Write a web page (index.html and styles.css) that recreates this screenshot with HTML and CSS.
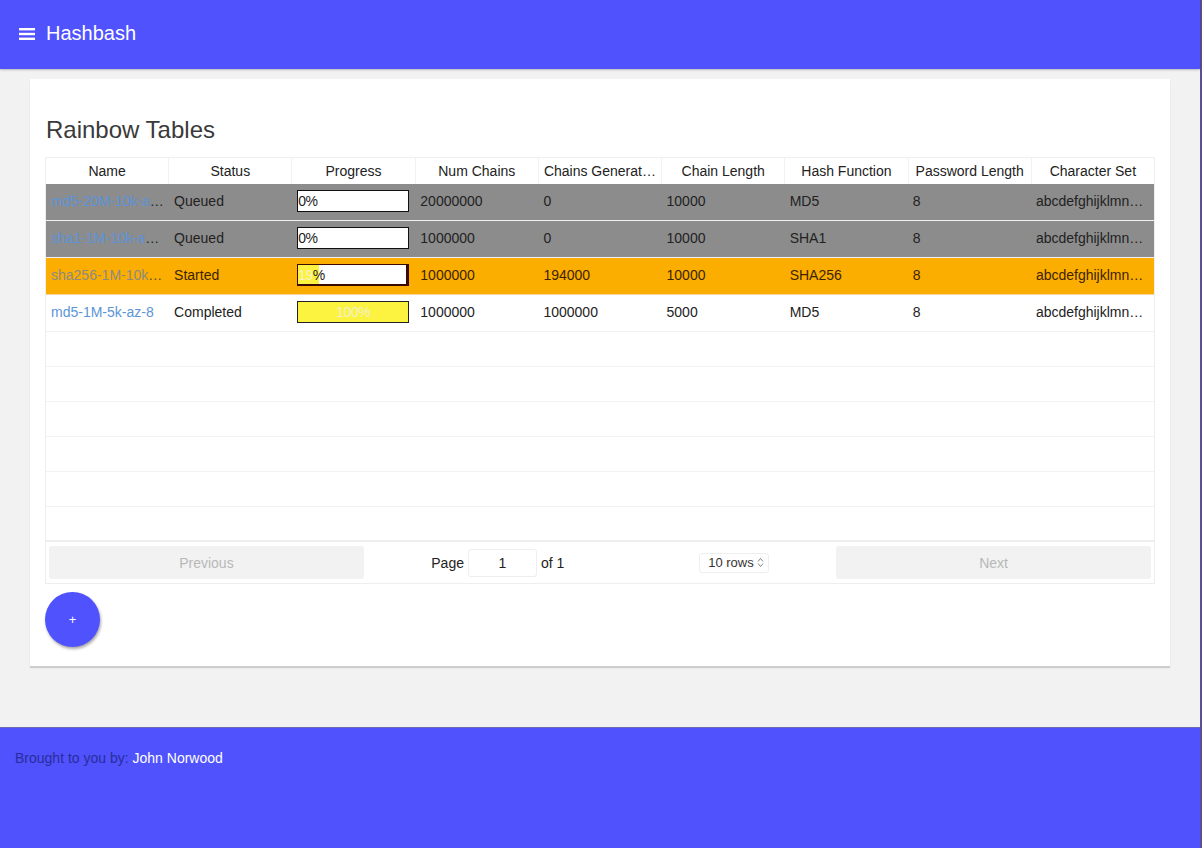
FILE: index.html
```html
<!DOCTYPE html>
<html>
<head>
<meta charset="utf-8">
<title>Hashbash</title>
<link rel="stylesheet" href="styles.css">
</head>
<body>
<div class="page">
  <header class="appbar">
    <svg class="menu" width="16" height="14" viewBox="0 0 16 14"><rect x="0" y="1" width="16" height="2.4" fill="#fff"/><rect x="0" y="5.8" width="16" height="2.4" fill="#fff"/><rect x="0" y="10.6" width="16" height="2.4" fill="#fff"/></svg>
    <span class="brand">Hashbash</span>
  </header>
  <main class="main">
    <section class="card">
      <h1 class="title">Rainbow Tables</h1>
      <div class="table">
        <div class="row head">
          <div class="cell">Name</div>
          <div class="cell">Status</div>
          <div class="cell">Progress</div>
          <div class="cell">Num Chains</div>
          <div class="cell">Chains Generated</div>
          <div class="cell">Chain Length</div>
          <div class="cell">Hash Function</div>
          <div class="cell">Password Length</div>
          <div class="cell">Character Set</div>
        </div>
        <div class="row data queued">
          <div class="cell"><a class="link">md5-20M-10k-az-8</a></div>
          <div class="cell">Queued</div>
          <div class="cell"><div class="bar"><span class="label">0%</span></div></div>
          <div class="cell">20000000</div>
          <div class="cell">0</div>
          <div class="cell">10000</div>
          <div class="cell">MD5</div>
          <div class="cell">8</div>
          <div class="cell">abcdefghijklmnopqrstuvwxyz</div>
        </div>
        <div class="row data queued">
          <div class="cell"><a class="link">sha1-1M-10k-az-8</a></div>
          <div class="cell">Queued</div>
          <div class="cell"><div class="bar"><span class="label">0%</span></div></div>
          <div class="cell">1000000</div>
          <div class="cell">0</div>
          <div class="cell">10000</div>
          <div class="cell">SHA1</div>
          <div class="cell">8</div>
          <div class="cell">abcdefghijklmnopqrstuvwxyz</div>
        </div>
        <div class="row data started">
          <div class="cell"><a class="link">sha256-1M-10k-az-8</a></div>
          <div class="cell">Started</div>
          <div class="cell"><div class="bar dark"><div class="fill" style="width:19%"></div><span class="label"><span class="on-fill">19</span>%</span></div></div>
          <div class="cell">1000000</div>
          <div class="cell">194000</div>
          <div class="cell">10000</div>
          <div class="cell">SHA256</div>
          <div class="cell">8</div>
          <div class="cell">abcdefghijklmnopqrstuvwxyz</div>
        </div>
        <div class="row data">
          <div class="cell"><a class="link">md5-1M-5k-az-8</a></div>
          <div class="cell">Completed</div>
          <div class="cell"><div class="bar full"><span class="label center">100%</span></div></div>
          <div class="cell">1000000</div>
          <div class="cell">1000000</div>
          <div class="cell">5000</div>
          <div class="cell">MD5</div>
          <div class="cell">8</div>
          <div class="cell">abcdefghijklmnopqrstuvwxyz</div>
        </div>
        <div class="row empty"><div class="cell"></div><div class="cell"></div><div class="cell"></div><div class="cell"></div><div class="cell"></div><div class="cell"></div><div class="cell"></div><div class="cell"></div><div class="cell"></div></div>
        <div class="row empty"><div class="cell"></div><div class="cell"></div><div class="cell"></div><div class="cell"></div><div class="cell"></div><div class="cell"></div><div class="cell"></div><div class="cell"></div><div class="cell"></div></div>
        <div class="row empty"><div class="cell"></div><div class="cell"></div><div class="cell"></div><div class="cell"></div><div class="cell"></div><div class="cell"></div><div class="cell"></div><div class="cell"></div><div class="cell"></div></div>
        <div class="row empty"><div class="cell"></div><div class="cell"></div><div class="cell"></div><div class="cell"></div><div class="cell"></div><div class="cell"></div><div class="cell"></div><div class="cell"></div><div class="cell"></div></div>
        <div class="row empty"><div class="cell"></div><div class="cell"></div><div class="cell"></div><div class="cell"></div><div class="cell"></div><div class="cell"></div><div class="cell"></div><div class="cell"></div><div class="cell"></div></div>
        <div class="row empty last"><div class="cell"></div><div class="cell"></div><div class="cell"></div><div class="cell"></div><div class="cell"></div><div class="cell"></div><div class="cell"></div><div class="cell"></div><div class="cell"></div></div>
        <div class="pagination">
          <div class="pg-side"><button class="pg-btn">Previous</button></div>
          <div class="pg-center">
            <span class="pg-info">Page <span class="pg-input">1</span> of 1</span>
            <span class="pg-select">10 rows <svg width="7" height="11" viewBox="0 0 7 11"><path d="M1 4.5 L3.5 1.5 L6 4.5 M1 6.5 L3.5 9.5 L6 6.5" fill="none" stroke="#666" stroke-width="0.8"/></svg></span>
          </div>
          <div class="pg-side"><button class="pg-btn">Next</button></div>
        </div>
      </div>
      <button class="fab">+</button>
    </section>
  </main>
  <footer class="footer">
    <span class="by">Brought to you by:</span> <span class="author">John Norwood</span>
  </footer>
</div>
</body>
</html>
```

FILE: styles.css
```css
* { box-sizing: border-box; }
html, body { margin: 0; padding: 0; }
body {
  font-family: "Liberation Sans", Arial, sans-serif;
  font-size: 14px;
  color: #222;
  background: #f2f2f2;
}
.page {
  width: 1202px;
  min-height: 848px;
  display: flex;
  flex-direction: column;
  border-right: 2px solid #5d4f93;
}
.appbar {
  height: 69px;
  background: #4f52fd;
  display: flex;
  align-items: center;
  padding-left: 19px;
  box-shadow: 0 1px 2px rgba(0,0,0,0.25);
}
.menu { display: block; margin-right: 11px; margin-top: -2px; }
.brand { color: #fff; font-size: 20px; margin-top: -3px; }
.main {
  padding: 10px 30px 0 30px;
  height: 658px;
}
.card {
  background: #fff;
  height: 587px;
  padding: 36px 15px 0 15px;
  box-shadow: 0 2px 1px rgba(0,0,0,0.15);
}
.title {
  margin: 0 0 13px 1px;
  font-weight: normal;
  font-size: 24px;
  line-height: 29px;
  color: #3a3a3a;
  letter-spacing: 0px;
}
.table {
  border: 1px solid #eee;
  width: 1110px;
}
.row {
  display: flex;
}
.cell {
  flex: 1 1 0;
  min-width: 0;
  padding: 0 5px;
  white-space: nowrap;
  overflow: hidden;
  text-overflow: ellipsis;
}
.head {
  height: 26px;
}
.head .cell {
  border-right: 1px solid #f2f2f2;
  text-align: center;
  line-height: 26px;
}
.head .cell:last-child { border-right: none; }
.data {
  height: 37px;
  border-bottom: 1px solid #f0f0f0;
}
.data .cell { line-height: 35px; }
.queued { background: #8c8c8c; border-bottom: 1px solid #f0f0f0; }
.started { background: #fbae00; color: #3e2300; border-bottom: 1px solid #f4d89a; }
.link { color: #5b95d6; }
.queued .link { color: #5c93d8; }
.started .link { color: #8e8a80; }
.started .cell:first-child { color: #5a4a2a; }
.bar {
  position: relative;
  margin-top: 6px;
  width: 112px;
  height: 22px;
  border: 1px solid #111;
  background: #fff;
  overflow: hidden;
}
.bar.dark {
  border-color: #3a0a00;
  border-right-width: 3px;
  border-bottom-width: 2px;
}
.bar.full { background: #fbf340; border-color: #222; }
.fill { position: absolute; left: 0; top: 0; bottom: 0; background: #fbf340; }
.label {
  position: relative;
  display: block;
  line-height: 20px;
  font-size: 14px;
  color: #222;
  letter-spacing: -0.5px;
}
.on-fill { color: #f6f2c4; }
.label.center { text-align: center; color: #f4f0c8; }
.empty {
  height: 35px;
  border-bottom: 1px solid #f2f2f2;
}
.empty.last { border-bottom: 2px solid #eee; }
.pagination {
  display: flex;
  align-items: center;
  height: 41px;
  padding: 3px;
}
.pg-side { flex: 1 1 0; display: flex; }
.pg-btn {
  width: 100%;
  height: 33px;
  border: none;
  border-radius: 3px;
  background: #f2f2f2;
  color: #b8b8b8;
  font-family: "Liberation Sans", Arial, sans-serif;
  font-size: 14px;
}
.pg-center {
  flex: 1.5 1 0;
  display: flex;
  align-items: center;
  justify-content: space-around;
}
.pg-info { display: flex; align-items: center; gap: 4px; }
.pg-input {
  display: inline-block;
  width: 69px;
  height: 28px;
  border: 1px solid #eee;
  border-radius: 3px;
  text-align: center;
  line-height: 26px;
}
.pg-select {
  display: inline-flex;
  align-items: center;
  gap: 3px;
  height: 20px;
  padding: 0 4px 0 8px;
  border: 1px solid #eee;
  border-radius: 3px;
  font-size: 13px;
  color: #333;
}
.fab {
  margin-top: 8px;
  width: 55px;
  height: 55px;
  border-radius: 50%;
  border: none;
  background: #4f52fd;
  color: #fff;
  font-size: 13px;
  box-shadow: 1px 2px 3px rgba(0,0,0,0.35);
  display: block;
}
.footer {
  flex: 1;
  background: #4f52fd;
  padding: 22px 15px 0 15px;
  font-size: 14px;
  border-top: 1px solid #6a6ab0;
}
.by { color: #2a2d9a; }
.author { color: #fff; }
```
